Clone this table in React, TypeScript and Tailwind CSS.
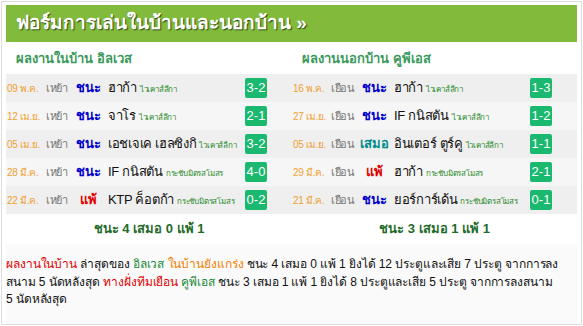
import React from "react";

type Row = {
  date: string;
  venue: string;
  result: "ชนะ" | "แพ้" | "เสมอ";
  team: string;
  league: string;
  score: string;
};

const home: Row[] = [
  { date: "09 พ.ค.", venue: "เหย้า", result: "ชนะ", team: "ฮาก้า", league: "ไวเคาส์ลีกา", score: "3-2" },
  { date: "12 เม.ย.", venue: "เหย้า", result: "ชนะ", team: "จาโร", league: "ไวเคาส์ลีกา", score: "2-1" },
  { date: "05 เม.ย.", venue: "เหย้า", result: "ชนะ", team: "เอชเจเค เฮลซิงกิ", league: "ไวเคาส์ลีกา", score: "3-2" },
  { date: "28 มี.ค.", venue: "เหย้า", result: "ชนะ", team: "IF กนิสตัน", league: "กระชับมิตรสโมสร", score: "4-0" },
  { date: "22 มี.ค.", venue: "เหย้า", result: "แพ้", team: "KTP ค็อตก้า", league: "กระชับมิตรสโมสร", score: "0-2" },
];

const away: Row[] = [
  { date: "16 พ.ค.", venue: "เยือน", result: "ชนะ", team: "ฮาก้า", league: "ไวเคาส์ลีกา", score: "1-3" },
  { date: "27 เม.ย.", venue: "เยือน", result: "ชนะ", team: "IF กนิสตัน", league: "ไวเคาส์ลีกา", score: "1-2" },
  { date: "05 เม.ย.", venue: "เยือน", result: "เสมอ", team: "อินเตอร์ ตูร์คู", league: "ไวเคาส์ลีกา", score: "1-1" },
  { date: "29 มี.ค.", venue: "เยือน", result: "แพ้", team: "ฮาก้า", league: "กระชับมิตรสโมสร", score: "2-1" },
  { date: "21 มี.ค.", venue: "เยือน", result: "ชนะ", team: "ยอร์การ์เด้น", league: "กระชับมิตรสโมสร", score: "0-1" },
];

function resultClass(r: Row["result"]) {
  if (r === "ชนะ") return "text-[#0000cc]";
  if (r === "แพ้") return "text-[#e00000]";
  return "text-[#008b8b]";
}

function Column({ title, rows, summary }: { title: string; rows: Row[]; summary: string }) {
  return (
    <div className="flex flex-col">
      <div className="h-[32px] flex items-center pl-[10px] pt-[2px] text-[13px] font-bold text-[#3a9a5c]">{title}</div>
      {rows.map((r, i) => (
        <div
          key={i}
          className={`h-[28px] flex items-center ${i % 2 === 0 ? "bg-[#efefef]" : "bg-[#f6f6f6]"}`}
        >
          <div className="w-[37px] shrink-0 pl-[1px] text-[10px] text-[#f0a030] whitespace-nowrap tracking-[-0.3px]">{r.date}</div>
          <div className="w-[28px] shrink-0 text-center text-[11px] text-[#777] tracking-[-0.3px]">{r.venue}</div>
          <div className={`w-[35px] shrink-0 text-center text-[13px] font-bold ${resultClass(r.result)}`}>{r.result}</div>
          <div className="flex-1 ml-[2px] flex items-baseline gap-[3px] whitespace-nowrap overflow-hidden">
            <span className="text-[13px] text-[#111] tracking-[-0.3px]">{r.team}</span>
            <span className="text-[8px] text-[#2a8a2a] tracking-[-0.2px]">{r.league}</span>
          </div>
          <div className="w-[22px] h-[20px] shrink-0 rounded-[2px] bg-[#1bb870] text-white text-[13px] flex items-center justify-center mr-[25px] ml-[2px]">
            {r.score}
          </div>
        </div>
      ))}
      <div className="h-[30px] flex items-center justify-center text-[13px] font-bold text-[#1f6b2a]">{summary}</div>
    </div>
  );
}

export default function App() {
  return (
    <div
      className="w-[583px] h-[326px] bg-white p-[1px]"
      style={{ fontFamily: '"Liberation Sans", Tahoma, "Noto Sans", sans-serif' }}
    >
      <div className="h-full border border-[#dddddd] px-[4px] pt-[3px] flex flex-col">
        <div className="h-[37px] bg-[#82bb3c] flex items-center pl-[10px]">
          <span className="text-white font-bold text-[19px] [text-shadow:1px_1px_1px_#2a4a10]">
            ฟอร์มการเล่นในบ้านและนอกบ้าน »
          </span>
        </div>
        <div className="grid grid-cols-[286px_285px]">
          <Column title="ผลงานในบ้าน อิลเวส" rows={home} summary="ชนะ 4 เสมอ 0 แพ้ 1" />
          <Column title="ผลงานนอกบ้าน คูพีเอส" rows={away} summary="ชนะ 3 เสมอ 1 แพ้ 1" />
        </div>
        <div className="flex-1 bg-[#fafafa] pt-[12px] text-[12px] leading-[17.5px] text-[#111] tracking-[-0.1px]">
          <span className="text-[#e00000]">ผลงานในบ้าน</span> ล่าสุดของ{" "}
          <span className="text-[#1a8a3a]">อิลเวส</span>{" "}
          <span className="text-[#f08000]">ในบ้านยังแกร่ง</span> ชนะ 4 เสมอ 0 แพ้ 1 ยิงได้ 12 ประตูและเสีย 7 ประตู จากการลงสนาม 5{"\u00a0"}นัดหลังสุด{" "}
          <span className="text-[#e00000]">ทางฝั่งทีมเยือน</span>{" "}
          <span className="text-[#1a8a3a]">คูพีเอส</span> ชนะ 3 เสมอ 1 แพ้ 1 ยิงได้ 8 ประตูและเสีย 5 ประตู จากการลงสนาม 5{"\u00a0"}นัดหลังสุด
        </div>
      </div>
    </div>
  );
}
